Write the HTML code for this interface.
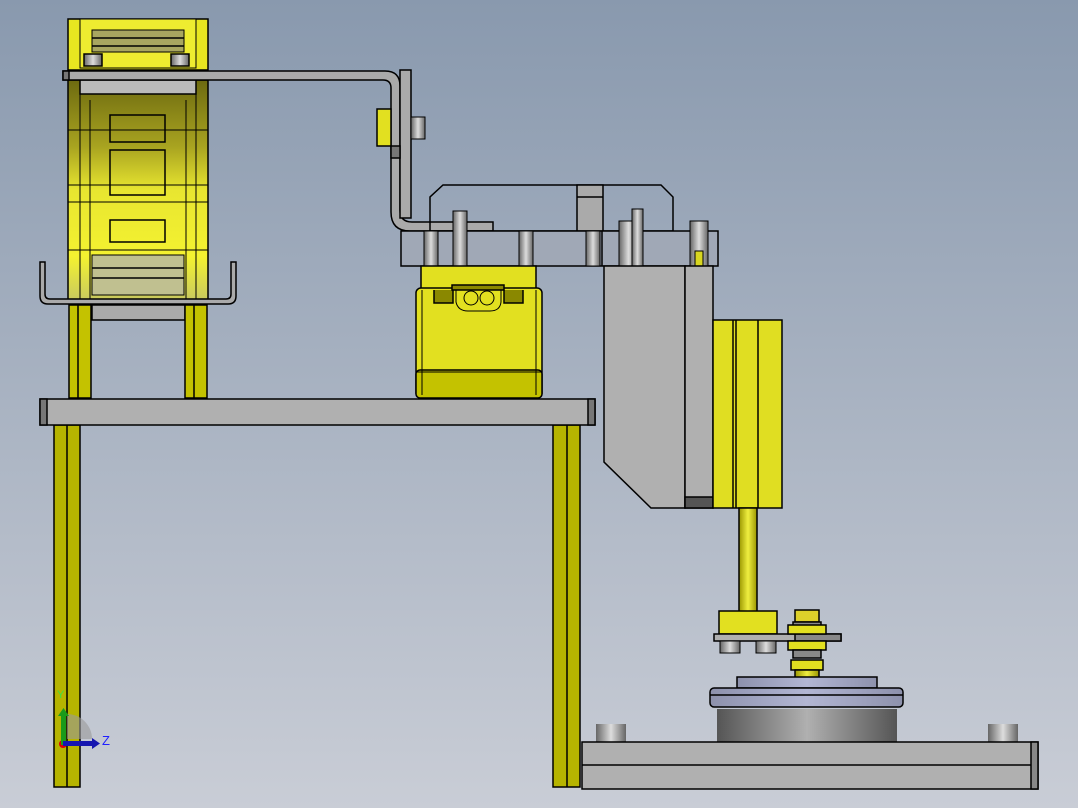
<!DOCTYPE html>
<html><head><meta charset="utf-8"><style>html,body{margin:0;padding:0;width:1078px;height:808px;overflow:hidden}svg{display:block}</style></head><body>
<svg width="1078" height="808" viewBox="0 0 1078 808" xmlns="http://www.w3.org/2000/svg" stroke="#000" stroke-width="1.5">
<defs>
<linearGradient id="bg" x1="0" y1="0" x2="0" y2="1"><stop offset="0" stop-color="#8999ae"/><stop offset="1" stop-color="#c9cdd6"/></linearGradient>
<linearGradient id="chain" x1="0" y1="0" x2="0" y2="1"><stop offset="0" stop-color="#6d6a10"/><stop offset="0.3" stop-color="#a8a320"/><stop offset="0.5" stop-color="#e8e630"/><stop offset="0.8" stop-color="#f4f230"/><stop offset="1" stop-color="#c8c860"/></linearGradient>
<linearGradient id="cyl" x1="0" y1="0" x2="1" y2="0"><stop offset="0" stop-color="#555"/><stop offset="0.5" stop-color="#b0b0b0"/><stop offset="1" stop-color="#555"/></linearGradient>
<linearGradient id="bolt" x1="0" y1="0" x2="1" y2="0"><stop offset="0" stop-color="#666"/><stop offset="0.5" stop-color="#ddd"/><stop offset="1" stop-color="#666"/></linearGradient>
<linearGradient id="disc" x1="0" y1="0" x2="1" y2="0"><stop offset="0" stop-color="#8d91ac"/><stop offset="0.5" stop-color="#b2b6d4"/><stop offset="1" stop-color="#8d91ac"/></linearGradient>
<linearGradient id="rod" x1="0" y1="0" x2="1" y2="0"><stop offset="0" stop-color="#9a9600"/><stop offset="0.5" stop-color="#f0ee40"/><stop offset="1" stop-color="#9a9600"/></linearGradient>
</defs>
<rect width="1078" height="808" fill="url(#bg)" stroke="none"/>

<!-- chain -->
<rect x="68" y="19" width="140" height="51" fill="#e8e620"/>
<rect x="80" y="19" width="116" height="49" fill="#eeec30" stroke-width="1"/>
<rect x="92" y="30" width="92" height="22" fill="#a8a660" stroke-width="1"/>
<line x1="92" y1="38" x2="184" y2="38"/><line x1="92" y1="46" x2="184" y2="46"/>
<rect x="84" y="54" width="18" height="12" fill="url(#bolt)"/><rect x="171" y="54" width="18" height="12" fill="url(#bolt)"/>
<rect x="68" y="80" width="140" height="221" fill="url(#chain)"/>
<rect x="80" y="80" width="116" height="14" fill="#bbb"/>
<rect x="110" y="115" width="55" height="27" fill="none"/>
<rect x="110" y="150" width="55" height="45" fill="none"/>
<rect x="110" y="220" width="55" height="22" fill="none"/>
<line x1="80" y1="94" x2="80" y2="300" stroke-width="1"/><line x1="196" y1="94" x2="196" y2="300" stroke-width="1"/>
<line x1="90" y1="100" x2="90" y2="300" stroke-width="1"/><line x1="186" y1="100" x2="186" y2="300" stroke-width="1"/>
<line x1="68" y1="130" x2="208" y2="130" stroke-width="1"/><line x1="68" y1="185" x2="208" y2="185" stroke-width="1"/><line x1="68" y1="202" x2="208" y2="202" stroke-width="1"/><line x1="68" y1="250" x2="208" y2="250" stroke-width="1"/>
<rect x="92" y="255" width="92" height="40" fill="#c0c090" stroke-width="1"/>
<line x1="92" y1="268" x2="184" y2="268"/><line x1="92" y1="278" x2="184" y2="278"/>
<!-- bracket -->
<path d="M63 71 H385 Q400 71 400 86 V210 Q400 222 412 222 H493 V231 H410 Q391 231 391 212 V88 Q391 80 383 80 H63 Z" fill="#aaa"/>
<rect x="63" y="71" width="6" height="9" fill="#777"/>
<rect x="400" y="70" width="11" height="148" fill="#aaa"/>
<rect x="377" y="109" width="14" height="37" fill="#e2e020"/>
<rect x="411" y="117" width="14" height="22" fill="url(#bolt)" stroke-width="1"/>
<rect x="391" y="146" width="9" height="12" fill="#777"/>
<!-- tray -->
<path d="M40 262 V296 Q40 304 48 304 H228 Q236 304 236 296 V262 H231 V294 Q231 299 226 299 H50 Q45 299 45 294 V262 Z" fill="#aaa"/>
<rect x="92" y="305" width="93" height="15" fill="#aaa"/>
<rect x="69" y="305" width="22" height="93" fill="#c4c200"/><line x1="78" y1="305" x2="78" y2="398"/>
<rect x="185" y="305" width="22" height="93" fill="#c4c200"/><line x1="194" y1="305" x2="194" y2="398"/>
<!-- table -->
<rect x="54" y="425" width="26" height="362" fill="#b6b400"/><line x1="67" y1="425" x2="67" y2="787"/>
<rect x="553" y="425" width="27" height="362" fill="#b6b400"/><line x1="567" y1="425" x2="567" y2="787"/>
<rect x="40" y="399" width="555" height="26" fill="#b0b0b0"/>
<rect x="40" y="399" width="7" height="26" fill="#777"/><rect x="588" y="399" width="7" height="26" fill="#777"/>
<!-- upper plate assembly -->
<path d="M443 185 H661 L673 197 V231 H430 V197 Z" fill="none"/>
<rect x="577" y="185" width="26" height="46" fill="#aaa"/><line x1="577" y1="197" x2="603" y2="197"/>
<rect x="401" y="231" width="317" height="35" fill="#a0a8b6"/>
<line x1="602" y1="231" x2="602" y2="266"/>
<rect x="424" y="231" width="14" height="35" fill="url(#bolt)" stroke-width="1"/>
<rect x="453" y="211" width="14" height="55" fill="url(#bolt)" stroke-width="1"/>
<rect x="519" y="231" width="14" height="35" fill="url(#bolt)" stroke-width="1"/>
<rect x="586" y="231" width="14" height="35" fill="url(#bolt)" stroke-width="1"/>
<rect x="619" y="221" width="19" height="45" fill="url(#bolt)" stroke-width="1"/>
<rect x="632" y="209" width="11" height="57" fill="url(#bolt)" stroke-width="1"/>
<rect x="690" y="221" width="18" height="45" fill="url(#bolt)" stroke-width="1"/>
<rect x="695" y="251" width="8" height="15" fill="#d8d620" stroke-width="1"/>
<!-- yellow box -->
<rect x="421" y="266" width="115" height="24" fill="#e2e020"/>
<rect x="416" y="288" width="126" height="110" rx="5" fill="#e2e020"/>
<rect x="416" y="370" width="126" height="28" rx="4" fill="#c4c200"/>
<line x1="422" y1="290" x2="422" y2="395" stroke-width="1"/><line x1="536" y1="290" x2="536" y2="395" stroke-width="1"/>
<line x1="416" y1="372" x2="542" y2="372" stroke-width="1"/>
<path d="M434 290 V303 H453 V290" fill="#8a8800"/><path d="M504 290 V303 H523 V290" fill="#8a8800"/>
<rect x="452" y="285" width="52" height="5" fill="#8a8800"/>
<circle cx="471" cy="298" r="7" fill="none" stroke-width="1"/><circle cx="487" cy="298" r="7" fill="none" stroke-width="1"/>
<path d="M456 290 V302 Q458 311 468 311 H490 Q500 311 501 302 V290" fill="none" stroke-width="1"/>
<!-- gray vertical -->
<path d="M604 266 H685 V508 H651 L604 462 Z" fill="#b0b0b0"/>
<rect x="685" y="266" width="28" height="242" fill="#b0b0b0"/>
<rect x="685" y="497" width="28" height="11" fill="#555"/>
<rect x="713" y="320" width="69" height="188" fill="#e0de22"/>
<line x1="733" y1="320" x2="733" y2="508"/><line x1="736" y1="320" x2="736" y2="508"/><line x1="758" y1="320" x2="758" y2="508"/>
<rect x="739" y="508" width="18" height="104" fill="url(#rod)"/>
<rect x="719" y="611" width="58" height="23" fill="#e2e020"/>
<rect x="714" y="634" width="127" height="7" fill="#b0b0b0"/><rect x="795" y="634" width="46" height="7" fill="#888"/>
<rect x="720" y="641" width="20" height="12" fill="url(#bolt)" stroke-width="1"/><rect x="756" y="641" width="20" height="12" fill="url(#bolt)" stroke-width="1"/>
<!-- fitting -->
<rect x="795" y="610" width="24" height="12" fill="#ddd02a"/>
<rect x="793" y="622" width="28" height="10" fill="#888"/>
<rect x="788" y="625" width="38" height="9" fill="#e2e020"/><rect x="788" y="641" width="38" height="9" fill="#e2e020"/>
<rect x="793" y="650" width="28" height="8" fill="#888"/>
<rect x="791" y="660" width="32" height="10" fill="#e2e020"/>
<rect x="795" y="670" width="24" height="17" fill="url(#rod)"/>
<!-- disc -->
<rect x="737" y="677" width="140" height="11" fill="url(#disc)"/>
<rect x="710" y="688" width="193" height="19" rx="4" fill="url(#disc)"/>
<line x1="710" y1="695" x2="903" y2="695"/>
<rect x="717" y="709" width="180" height="33" fill="url(#cyl)" stroke="none"/>
<rect x="596" y="724" width="30" height="18" fill="url(#bolt)" stroke="none"/>
<rect x="988" y="724" width="30" height="18" fill="url(#bolt)" stroke="none"/>
<rect x="582" y="742" width="456" height="47" fill="#b0b0b0"/>
<line x1="582" y1="765" x2="1038" y2="765"/>
<rect x="1031" y="742" width="7" height="47" fill="#888"/>
<!-- triad -->
<g stroke="none">
<path d="M67 714 A25 25 0 0 1 92 739 L67 739 Z" fill="#999" opacity="0.6"/>
<circle cx="63" cy="744" r="4" fill="#d00"/>
<rect x="61" y="715" width="5" height="30" fill="#1a9a1a"/><path d="M58 716 L63.5 708 L69 716 Z" fill="#1a9a1a"/>
<rect x="63" y="741" width="30" height="5" fill="#1616b0"/><path d="M92 738 L100 743.5 L92 749 Z" fill="#1616b0"/>
</g>
<text x="57" y="698" font-family="Liberation Sans, sans-serif" font-size="11" fill="#40e040" stroke="none">Y</text>
<text x="102" y="745" font-family="Liberation Sans, sans-serif" font-size="13" fill="#2020ff" stroke="none">Z</text>
</svg>
</body></html>
